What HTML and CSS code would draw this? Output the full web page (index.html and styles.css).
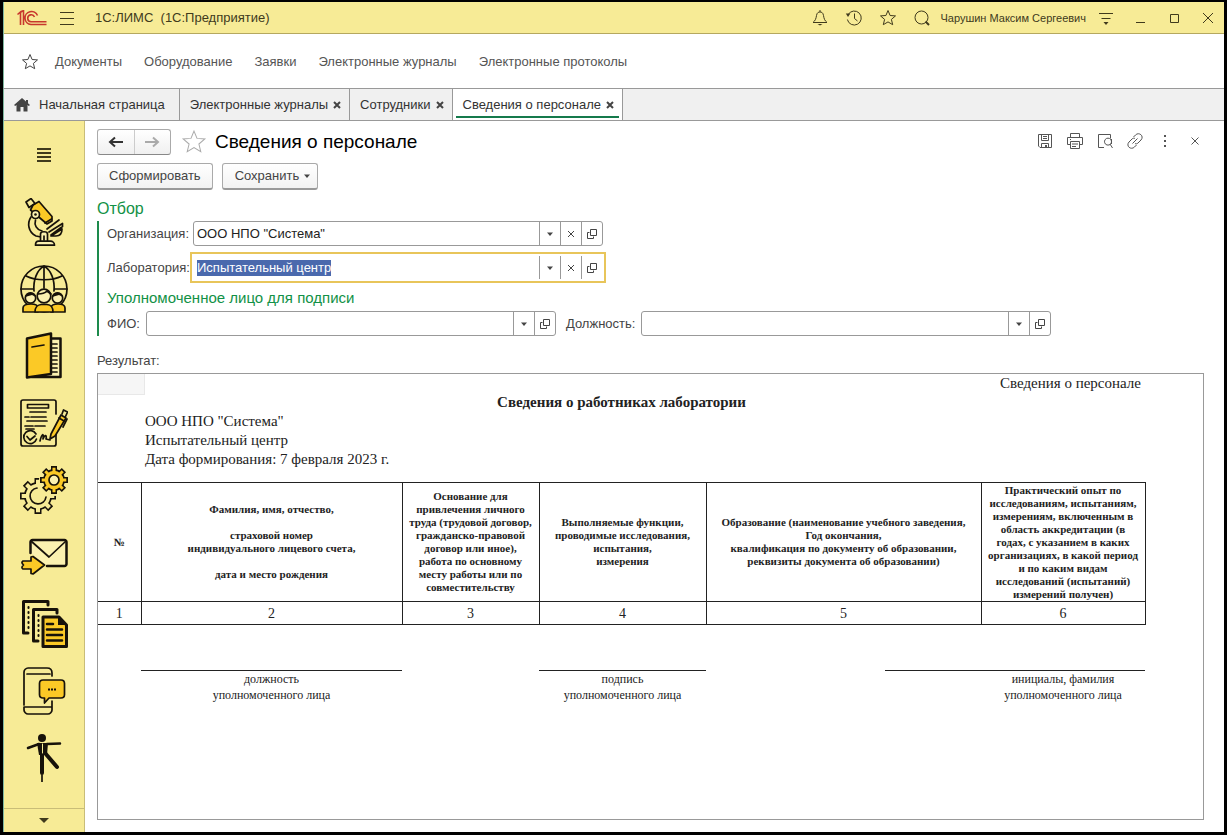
FILE: index.html
```html
<!DOCTYPE html>
<html lang="ru">
<head>
<meta charset="utf-8">
<title>Сведения о персонале</title>
<link rel="stylesheet" href="styles.css">
</head>
<body>
<svg class="defs" aria-hidden="true">
  <symbol id="star" viewBox="0 0 18 18"><path d="M9 1.500l2.100 5 5.400.4-4.100 3.500 1.300 5.300L9 12.900l-4.700 2.800 1.300-5.300L1.500 6.900l5.400-.4z"/></symbol>
  <symbol id="open" viewBox="0 0 12 12"><path d="M4.500 1.500h6v6h-6zM3.500 4.500h-2v6h6v-2"/></symbol>
  <symbol id="cross" viewBox="0 0 12 12"><path d="M3 3l6 6M9 3l-6 6"/></symbol>
  <symbol id="down" viewBox="0 0 12 12"><path d="M3 4.500h6l-3 3.500z"/></symbol>
</svg>
<div class="window">
  <header class="titlebar">
    <svg class="logo" viewBox="0 0 30 16"><path d="M0.500 4.500l3-2.500v13M3 2.500l3.500-2v14.500M20.500 5.500a6.500 6.500 0 1 0-6.500 9H29.500M17.500 7a3.500 3.500 0 1 0-3.500 4.800H29.500"/></svg>
    <button class="icon" aria-label="Меню"><svg width="16" height="16"><path d="M1 2.500h14M1 8.500h14M1 14.500h14"/></svg></button>
    <span class="app-name">1С:ЛИМС&nbsp; (1С:Предприятие)</span>
    <div class="title-tools">
      <button class="icon" aria-label="Уведомления"><svg width="18" height="18"><path d="M2 13.500h14c-2.500-2-3-4-3.500-7C12 3.500 10.500 3 9 3S6 3.500 5.500 6.500C5 9.500 4.500 11.500 2 13.500zM9 1v2"/><path class="solid" d="M6.500 15h5L9 16.500z"/></svg></button>
      <button class="icon" aria-label="История"><svg width="18" height="18"><path d="M3.200 5.500a7 7 0 1 1-.8 5M9.500 4.500v5l3 2.500"/><path class="solid" d="M.8 4.500h4.500L3 8z"/></svg></button>
      <button class="icon" aria-label="Избранное"><svg width="18" height="18"><use href="#star"/></svg></button>
      <button class="icon" aria-label="Поиск"><svg width="18" height="18"><circle cx="8.500" cy="8.500" r="6.500"/><path class="thick" d="M12.500 12.500l3.500 3.500"/></svg></button>
      <span class="user">Чарушин Максим Сергеевич</span>
      <button class="icon" aria-label="Настройки"><svg width="18" height="18"><path d="M2 4.500h14M4.500 9.500h9"/><path class="solid" d="M6.500 13h5l-2.500 3z"/></svg></button>
      <button class="icon" aria-label="Свернуть"><svg width="18" height="18"><path d="M5 13.500h9"/></svg></button>
      <button class="icon" aria-label="Развернуть"><svg width="18" height="18"><path d="M5.500 5.500h8v8h-8z"/></svg></button>
      <button class="icon" aria-label="Закрыть окно"><svg width="18" height="18"><path d="M4 4l10 10M14 4L4 14"/></svg></button>
    </div>
  </header>

  <nav class="menu">
    <button class="icon" aria-label="Избранное"><svg width="18" height="18"><use href="#star"/></svg></button>
    <a href="#">Документы</a><a href="#">Оборудование</a><a href="#">Заявки</a><a href="#">Электронные журналы</a><a href="#">Электронные протоколы</a>
  </nav>

  <div class="tabs">
    <a class="tab home" href="#"><svg width="16" height="14"><path d="M8 0L0 7l1.200 1L2.500 7v6.500h4V9h3v4.500h4V7l1.300 1L16 7l-2-1.800V2h-2v1.500z"/></svg>Начальная страница</a>
    <div class="tab"><a href="#">Электронные журналы</a><button aria-label="Закрыть"><svg width="12" height="12"><use href="#cross"/></svg></button></div>
    <div class="tab"><a href="#">Сотрудники</a><button aria-label="Закрыть"><svg width="12" height="12"><use href="#cross"/></svg></button></div>
    <div class="tab active"><a href="#">Сведения о персонале</a><button aria-label="Закрыть"><svg width="12" height="12"><use href="#cross"/></svg></button></div>
  </div>

  <div class="workspace">
    <aside class="sidebar">
      <button class="icon burger" aria-label="Разделы"><svg width="14" height="14"><path d="M0 1h14M0 5h14M0 9h14M0 13h14"/></svg></button>
      <div class="sections">
        <a href="#" aria-label="Исследования"><svg viewBox="0 0 48 48">
          <path class="y" d="M13 7l6-3.500 13 15v4.500l-5 3L10.500 12z"/><path class="n" d="M25 25l6.500-4M6 4l5-3.500 4 5-6 4z"/><path class="n" d="M11 19c-4 6-3 15 5 19l5 1M15.500 22c-1.500 5 1 9.500 6.500 11"/>
          <circle class="w" cx="15.500" cy="16.500" r="4"/><circle class="k" cx="15.500" cy="16.500" r="1.300"/><path class="n" d="M27 31L39 22M29 34l13.500-8.500v3L31 37M31 38l11-7c0 4-2 7-6 7z"/>
          <path class="w" d="M20.500 43v-7c0-3 7-3 7 0v7zM15.500 47.200c0-2.500 1-4 3-4h12c2 0 4 1.500 4 4z"/><path class="n" d="M24 38v4"/></svg></a>
        <a href="#" aria-label="Организации"><svg viewBox="0 0 48 48">
          <circle class="n" cx="24" cy="24" r="23"/><path class="n" d="M24 1v22M1 24h13M34 24h13M6 11c10 5 26 5 36 0M14 26C13 15 17 5 24 1c7 4 11 14 10 25"/>
          <path class="y" d="M3 47v-4c0-3 3-4 8-4s7 1 7 4v4zM31 47v-4c0-3 3-4 7-4s7 1 7 4v4z"/><circle class="w" cx="10.500" cy="33" r="5.200"/><circle class="w" cx="37.500" cy="33" r="5.200"/><path class="k" d="M5 32c1-6 10-6 11 0l-4-2-7 2zM32 32c1-6 10-6 11 0l-4-2-7 2z"/>
          <path class="y" d="M15 47c0-6 3-7 6-7.500h6c4 .5 6 2 6 7.500z"/><circle class="w" cx="24" cy="31" r="6.800"/><path class="n" d="M18 29c4 0 7-1 9-3l4 3"/></svg></a>
        <a href="#" aria-label="Журналы"><svg viewBox="0 0 48 48">
          <path class="w b" d="M31 6.500h9.500v38.500H12"/><path class="y b" d="M7 6.500l24-5v40.500L7 45.500z"/><path class="n" d="M12 15l12-2M31 12h6M31 16h6M31 20h6M31 24h6M31 28h6M31 32h6M31 36h6M31 40h6"/></svg></a>
        <a href="#" aria-label="Договоры"><svg viewBox="0 0 48 48">
          <path class="n" d="M36 15V3c0-1-1-2-2-2H3C2 1 1 2 1 3v42c0 1 1 2 2 2h31c1 0 2-1 2-2V35M7.500 5.500h21v3.500h-21zM10 13h16M5 18h4M11 18h15M7 22h20M5 27h8M15 27h10M6 30h8"/>
          <path class="n" d="M16 35a6.500 6.500 0 1 0 .5 5M7 37.500l3 3.500 5-4M20 42c2-8 4-8 3-2 2-5 4-4 3 0l4 1"/><path class="y" d="M31 35L41 16l5 3-11 18-5 3z"/><path class="n" d="M39 19l5 3M42 15l1.500-4 4 2-2 4.500M47 20l-4 8"/></svg></a>
        <a href="#" aria-label="Настройки"><svg viewBox="0 0 48 48">
          <g class="gear-outer"><circle cx="18" cy="30" r="14"/><path d="M18 12v36M0 30h36M5.300 17.300l25.400 25.400M30.700 17.300L5.300 42.700"/></g>
          <g class="gear-inner"><circle cx="18" cy="30" r="12.300"/><path d="M18 13.700v32.600M1.700 30h32.600M6.500 18.500l23 23M29.500 18.500l-23 23"/><circle cx="35" cy="14" r="16"/></g>
          <path class="n" d="M17 22a8 8 0 1 0 9 9"/>
          <g class="gear-outer small"><circle cx="34" cy="14" r="11"/><path d="M34 0v28M20 14h28M24.100 4.100l19.800 19.800M43.900 4.100L24.100 23.900"/></g>
          <g class="gear-inner small"><circle cx="34" cy="14" r="9.300"/><path d="M34 1.700v24.600M21.700 14h24.600M25.300 5.300l17.400 17.400M42.700 5.300L25.300 22.700"/></g>
          <circle class="w" cx="34" cy="14" r="5"/></svg></a>
        <a href="#" aria-label="Почта"><svg viewBox="0 0 48 48">
          <path class="w b" d="M10.500 20V9c0-1 1-2 2-2h32c1 0 2 1 2 2v22c0 1-1 2-2 2H27"/><path class="n" d="M11 8l18 16L46 8"/><path class="y" d="M3 28h8v-4l2-.5L24.500 32 13 41l-2-.5V36H3c-1.500-1-1.500-2 .5-4C1.500 30 1.500 29 3 28z"/></svg></a>
        <a href="#" aria-label="Отчеты"><svg viewBox="0 0 48 48">
          <path class="n h" d="M28 5V1.500H3.500V33H8M37 13V9.500H13.500V41H18"/><path class="dots" d="M8.500 7v22M18.500 15v21"/><path class="y h" d="M23 17h16l7.500 8v21.500H23z"/><path class="k" d="M38 17v8h8z"/><path class="b n" d="M27 24h6M27 29.500h15M27 35h15M27 40.500h15"/></svg></a>
        <a href="#" aria-label="Сообщения"><svg viewBox="0 0 48 48">
          <path class="n" d="M4 38V5c0-2 2-4 4-4h19c3 0 5 2 5 5v3M7 7h23M4 40h28M32 34v9c0 2-2 4-4 4H8c-2 0-4-2-4-4v-3"/><path class="y" d="M23 13h18c2 0 3.500 1.500 3.500 3.500v11c0 2-1.500 3.500-3.500 3.500H29l-4.500 5v-5H23c-2 0-3.500-1.500-3.500-3.500v-11c0-2 1.500-3.500 3.500-3.500z"/><path class="k" d="M28 21.500h2v2h-2zM31 21.500h2v2h-2zM34 21.500h2v2h-2z"/></svg></a>
        <a href="#" aria-label="Персонал"><svg viewBox="0 0 48 48">
          <circle class="k" cx="22" cy="4" r="4"/><path class="k" d="M17 9h11l-1 12h-8z"/><path class="n b" d="M8 14l11-4M27 10l13-.5"/><path class="leg" d="M22 19v20M25 19l12 14"/><path class="n" d="M22 41v7"/><path class="tie" d="M22.500 10v9"/></svg></a>
      </div>
      <button class="icon more" aria-label="Прокрутить вниз"><svg width="12" height="12"><path class="solid" d="M1 3h10l-5 5z"/></svg></button>
    </aside>

    <main class="content">
      <div class="page-head">
        <div class="history"><button aria-label="Назад"><svg width="16" height="14"><path d="M2 7h13M7 2.500L2 7l5 4.500"/></svg></button><button aria-label="Вперед" class="muted"><svg width="16" height="14"><path d="M1 7h13M9 2.500L14 7l-5 4.500"/></svg></button></div>
        <button class="icon favorite" aria-label="В избранное"><svg width="26" height="26"><use href="#star"/></svg></button>
        <h1>Сведения о персонале</h1>
        <div class="page-tools">
          <button class="icon" aria-label="Сохранить файл"><svg width="18" height="18"><path d="M2.500 2.500h13v13H4l-1.500-1.500zM5.500 2.500v6h7v-6M7 4.500h4M7 6.500h4M5.500 15.500v-4h7v4"/><path class="solid" d="M9 13h2v2H9z"/></svg></button>
          <button class="icon" aria-label="Печать"><svg width="18" height="18"><path d="M4.500 5.500v-4h9v4M4.500 12.500h-3v-7h15v7h-3M4.500 9.500h9v7h-9zM6 12h6M6 14.500h4M4 7.500h1"/></svg></button>
          <button class="icon" aria-label="Просмотр"><svg width="18" height="18"><path d="M8 15.500H2.500v-13h12v4M11 13a3.500 3.500 0 1 1 2 0zM14 12l2.500 4M15.500 7v5"/></svg></button>
          <button class="icon" aria-label="Ссылка"><svg width="18" height="18"><path d="M7.500 5l2-2c3.500-3.500 9 1 5.500 5l-3 3c-1 1-2 1-3 .5M10.500 13l-2 2c-3.500 3.500-9-1-5.500-5l3-3c1-1 2-1 3-.5M6.500 11.500l5-5"/></svg></button>
          <button class="icon" aria-label="Еще"><svg width="18" height="18"><path class="solid" d="M8 3h2v2H8zM8 8h2v2H8zM8 13h2v2H8z"/></svg></button>
          <button class="icon" aria-label="Закрыть"><svg width="18" height="18"><path d="M5.500 5.500l7 7M12.500 5.500l-7 7"/></svg></button>
        </div>
      </div>
      <div class="commands">
        <button class="command">Сформировать</button>
        <button class="command split">Сохранить<svg width="12" height="12"><use href="#down"/></svg></button>
      </div>

      <h2>Отбор</h2>
      <section class="filter">
        <div class="field-row">
          <label for="org">Организация:</label>
          <div class="field"><input id="org" type="text" value='ООО НПО "Система"'><button aria-label="Выбрать из списка"><svg class="arrow"><use href="#down"/></svg></button><button aria-label="Очистить"><svg><use href="#cross"/></svg></button><button aria-label="Открыть"><svg><use href="#open"/></svg></button></div>
        </div>
        <div class="field-row current">
          <label for="lab">Лаборатория:</label>
          <div class="field focused"><input id="lab" type="text" value="Испытательный центр"><button aria-label="Выбрать из списка"><svg class="arrow"><use href="#down"/></svg></button><button aria-label="Очистить"><svg><use href="#cross"/></svg></button><button aria-label="Открыть"><svg><use href="#open"/></svg></button></div>
        </div>
        <h2>Уполномоченное лицо для подписи</h2>
        <div class="field-row signer">
          <label for="fio">ФИО:</label>
          <div class="field"><input id="fio" type="text"><button aria-label="Выбрать из списка"><svg class="arrow"><use href="#down"/></svg></button><button aria-label="Открыть"><svg><use href="#open"/></svg></button></div>
          <label for="post">Должность:</label>
          <div class="field"><input id="post" type="text"><button aria-label="Выбрать из списка"><svg class="arrow"><use href="#down"/></svg></button><button aria-label="Открыть"><svg><use href="#open"/></svg></button></div>
        </div>
      </section>

      <p class="result-label">Результат:</p>
      <section class="sheet">
        <div class="cell-cursor"></div>
        <div class="paper">
          <p class="stamp">Сведения о персонале</p>
          <h3>Сведения о работниках лаборатории</h3>
          <div class="details"><p>ООО НПО "Система"</p><p>Испытательный центр</p><p>Дата формирования: 7 февраля 2023 г.</p></div>
          <table>
            <colgroup><col class="c1"><col class="c2"><col class="c3"><col class="c4"><col class="c5"><col class="c6"></colgroup>
            <thead><tr>
              <th>№</th>
              <th>Фамилия, имя, отчество,<br><br>страховой номер<br>индивидуального лицевого счета,<br><br>дата и место рождения</th>
              <th>Основание для<br>привлечения личного<br>труда (трудовой договор,<br>гражданско-правовой<br>договор или иное),<br>работа по основному<br>месту работы или по<br>совместительству</th>
              <th>Выполняемые функции,<br>проводимые исследования,<br>испытания,<br>измерения</th>
              <th>Образование (наименование учебного заведения,<br>Год окончания,<br>квалификация по документу об образовании,<br>реквизиты документа об образовании)</th>
              <th>Практический опыт по<br>исследованиям, испытаниям,<br>измерениям, включенным в<br>область аккредитации (в<br>годах, с указанием в каких<br>организациях, в какой период<br>и по каким видам<br>исследований (испытаний)<br>измерений получен)</th>
            </tr></thead>
            <tbody><tr><td>1</td><td>2</td><td>3</td><td>4</td><td>5</td><td>6</td></tr></tbody>
          </table>
          <div class="signatures">
            <p class="s-post">должность<br>уполномоченного лица</p>
            <p class="s-sign">подпись<br>уполномоченного лица</p>
            <p class="s-gap"></p>
            <p class="s-name">инициалы, фамилия<br>уполномоченного лица</p>
          </div>
        </div>
      </section>
    </main>
  </div>
</div>
<script src="main.js"></script>
</body>
</html>
```

FILE: styles.css
```css
* { box-sizing: border-box; }
body { margin: 0; background: #000; color: #444; font: 13px/16px "Liberation Sans", Arial, sans-serif; }
h1, h2, h3, p { margin: 0; font-weight: normal; }
a { color: inherit; text-decoration: none; }
button { margin: 0; padding: 0; border: 0; background: none; color: inherit; font: inherit; display: flex; align-items: center; justify-content: center; }
svg { display: block; flex: none; fill: none; stroke: currentColor; }
.defs { position: absolute; width: 0; height: 0; }
.solid { fill: currentColor; stroke: none; }
.thick { stroke-width: 2; }

.window { display: flex; flex-direction: column; min-height: 100vh; border: solid #000; border-width: 2px 3px 3px; background: #fff; box-shadow: inset 1px 0 #7fb8a0; }

.titlebar { display: flex; align-items: center; height: 32px; padding: 0 7px 0 13px; margin-left: 1px; background: #f7eb96; border-bottom: 1px solid #b5a85f; color: #403a1c; }
.logo { width: 30px; height: 16px; margin-right: 12px; stroke: #c8372d; stroke-width: 1.6; }
.app-name { margin-left: 20px; }
.title-tools { display: flex; align-items: center; margin-left: auto; gap: 16px; }
.user { font-size: 11px; margin: 0 -5px 0 -7px; }

.menu { display: flex; align-items: center; gap: 22px; height: 55px; padding: 1px 0 0 18px; border-bottom: 1px solid #999; color: #555; }
.menu .icon { margin-right: -6px; color: #444; }

.tabs { display: flex; height: 32px; margin-left: 1px; background: #f0f0f0; border-bottom: 1px solid #999; color: #333; }
.tab { display: flex; align-items: center; padding: 0 6px 0 10px; gap: 3px; border-right: 1px solid #999; }
.tab button { stroke-width: 2; color: #444; }
.home { padding: 0 14px 0 10px; gap: 9px; }
.home svg { fill: #444; stroke: none; }
.active { background: linear-gradient(#157a4c, #157a4c) 50% calc(100% - 2px) / calc(100% - 6px) 2px no-repeat #fff; }

.workspace { display: flex; flex: 1; }
.sidebar { display: flex; flex-direction: column; width: 81px; flex: none; margin-left: 1px; background: #f7eb96; border-right: 1px solid #c9bd78; color: #403a1c; }
.burger { height: 68px; stroke-width: 2; }
.sections { display: flex; flex-direction: column; align-items: center; gap: 19px; padding-top: 9px; color: #17120a; }
.sections svg { width: 48px; height: 48px; stroke-width: 1.7; stroke-linecap: round; stroke-linejoin: round; }
.y { fill: #fbc926; }
.w { fill: #fbf1b0; }
.k { fill: #17120a; stroke: none; }
.b { stroke-width: 2.5; }
.h { stroke-width: 3; }
.dots { stroke-dasharray: 1 4; stroke-width: 2; }
.leg { stroke-width: 4; }
.tie { stroke: #f7eb96; stroke-width: 1; }
.gear-outer { fill: #17120a; stroke-width: 7; }
.gear-outer circle, .gear-inner circle { stroke: none; }
.gear-outer path, .gear-inner path { stroke-linecap: butt; }
.gear-inner { fill: #f7eb96; stroke: #f7eb96; stroke-width: 4; }
.gear-outer.small { stroke-width: 6; }
.gear-inner.small { fill: #fbc926; stroke: #fbc926; stroke-width: 3; }
.more { height: 24px; margin-top: auto; border-top: 1px solid #c9bd78; }

.content { display: flex; flex-direction: column; flex: 1; min-width: 0; padding: 8px 20px 12px 12px; }
.page-head { display: flex; align-items: center; height: 26px; }
.history { display: flex; width: 74px; height: 26px; border: 1px solid #aaa; border-bottom-color: #888; border-radius: 3px; background: linear-gradient(#fff, #f0f0f0); }
.history button { flex: 1; stroke-width: 2; color: #333; }
.history .muted { color: #aaa; border-left: 1px solid #ccc; }
.favorite { margin: 0 8px 0 10px; color: #aaa; stroke-width: 0.7; }
h1 { font-size: 19px; line-height: 24px; color: #000; }
.page-tools { display: flex; margin-left: auto; gap: 12px; padding-bottom: 2px; color: #555; }
.commands { display: flex; gap: 9px; margin-top: 8px; }
.command { height: 27px; padding: 0 11px; border: 1px solid #aaa; border-bottom: 2px solid #999; border-radius: 3px; background: linear-gradient(#fff, #f2f2f2); }
.split { padding: 0 4px 0 12px; gap: 2px; }
.split svg, .arrow { fill: #444; stroke: none; }

h2 { font-size: 16px; line-height: 20px; color: #129146; }
.content > h2 { margin-top: 9px; }
.filter { display: flex; flex-direction: column; margin-top: 2px; padding-left: 8px; border-left: 2px solid #1d8a4c; }
.filter h2 { margin: 5px 0 3px; font-size: 15px; }
.field-row { display: flex; align-items: center; }
.field-row label { flex: 0 0 86px; }
.field { display: flex; width: 410px; height: 25px; border: 1px solid #999; border-radius: 3px; background: #fff; }
.field input { flex: 1; min-width: 0; padding: 0 3px; border: 0; outline: 0; background: none; color: #222; font: inherit; }
.field button { width: 21px; border-left: 1px solid #999; }
.field svg { width: 12px; height: 12px; }
.current { margin-top: 6px; }
.current label { flex-basis: 83px; }
.focused { width: 416px; height: 31px; padding: 2px; border: 2px solid #e8c55a; border-radius: 0; }
.field ::selection { background: #4a69ad; color: #fff; }
.signer label { flex: none; margin-right: 6px; }
.signer .field { flex: 0 1 410px; margin-right: 10px; }

.result-label { margin: 17px 0 4px; }
.sheet { position: relative; display: flex; flex: 1; padding-right: 58px; border: 1px solid #999; color: #222; font: 15px/19px "Liberation Serif", "Times New Roman", serif; }
.cell-cursor { position: absolute; left: 0; top: 0; width: 47px; height: 21px; background: #f6f6f6; border: solid #e8e8e8; border-width: 0 1px 1px 0; }
.paper { flex: 1; min-width: 0; }
.stamp { text-align: right; padding-right: 4px; }
h3 { text-align: center; font-weight: bold; font-size: 15px; line-height: 19px; }
.details { padding: 0 0 13px 47px; }
table { width: 100%; table-layout: fixed; border-collapse: collapse; }
th, td { padding: 0; border: 1px solid #222; text-align: center; }
th:first-child, td:first-child { border-left: 0; }
th { height: 119px; font-size: 11px; line-height: 13px; }
td { height: 23px; font-size: 14px; }
.c1 { width: 43px; } .c2 { width: 261px; } .c3 { width: 137px; } .c4 { width: 167px; } .c5 { width: 275px; } .c6 { width: 164px; }
.signatures { display: grid; grid-template-columns: 43fr 261fr 137fr 167fr 179fr 96fr 164fr; margin-top: 45px; font-size: 12px; line-height: 16px; text-align: center; }
.signatures p { border-top: 1px solid #222; }
.s-post { grid-column: 2; }
.s-sign { grid-column: 4; }
.s-gap { grid-column: 6; }
.s-name { grid-column: 7; }
```

FILE: main.js
```js
const lab = document.getElementById('lab');
lab.focus();
lab.select();
```
